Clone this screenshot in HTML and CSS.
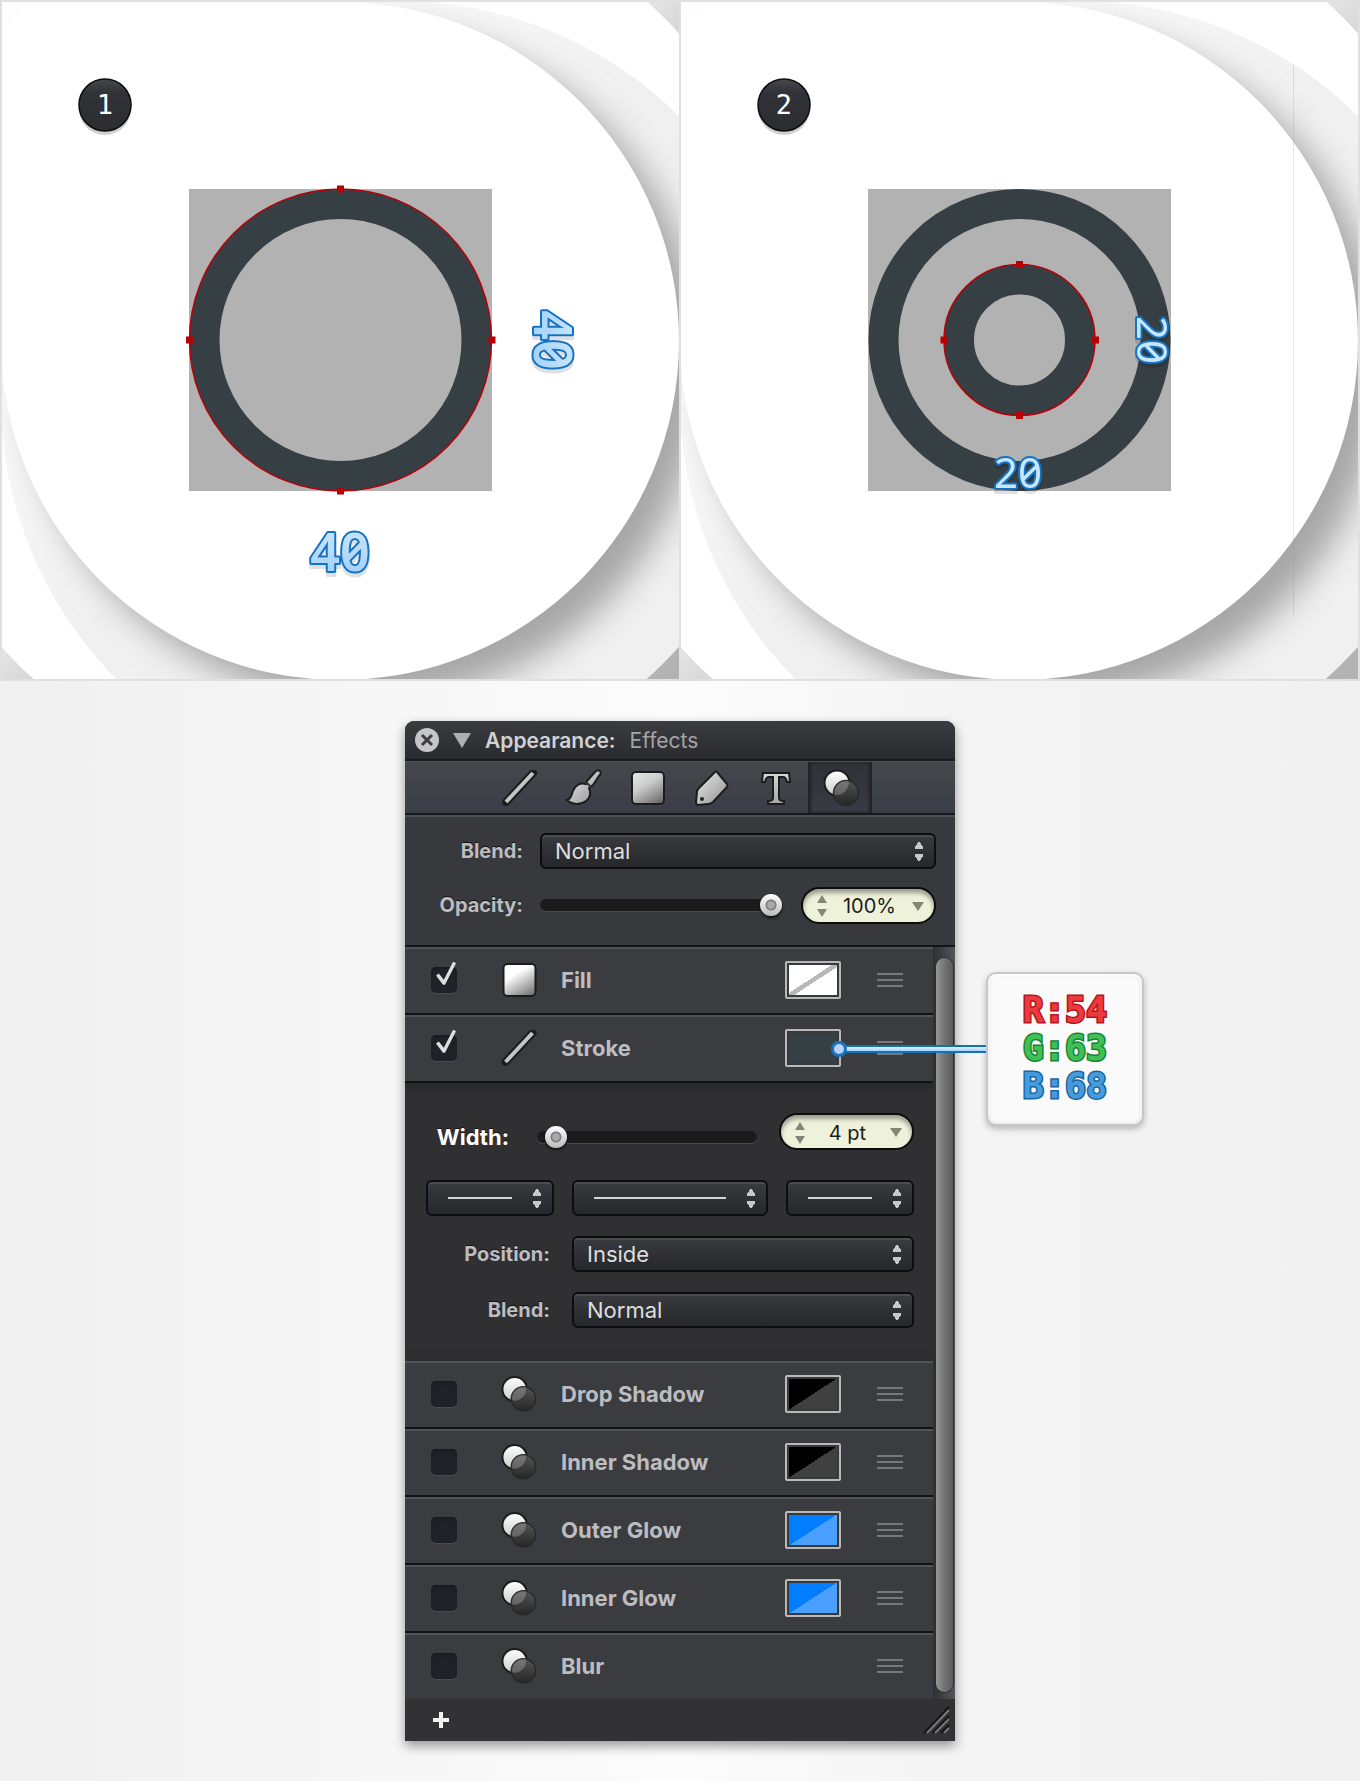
FILE: index.html
```html
<!DOCTYPE html>
<html lang="en">
<head>
<meta charset="utf-8">
<title>Appearance: Effects</title>
<link rel="stylesheet" href="styles.css">
</head>
<body>
<svg class="defs" aria-hidden="true">
  <defs>
    <linearGradient id="metal" x1="0" y1="0" x2="1" y2="1"><stop offset="0" stop-color="#f0f0f0"/><stop offset="1" stop-color="#8c8c8c"/></linearGradient>
    <linearGradient id="steel" x1="0" y1="0" x2="0" y2="1"><stop offset="0" stop-color="#d8d8d8"/><stop offset="1" stop-color="#a4a4a6"/></linearGradient>
    <linearGradient id="tile" x1="0.2" y1="0" x2="0.8" y2="1"><stop offset="0.3" stop-color="#fff"/><stop offset="1" stop-color="#777"/></linearGradient>
    <linearGradient id="dim" x1="0.2" y1="0" x2="0.8" y2="1"><stop offset="0" stop-color="#e4e4e4"/><stop offset="0.4" stop-color="#ccc"/><stop offset="1" stop-color="#6c6c6c"/></linearGradient>
    <linearGradient id="ball" x1="0" y1="0" x2="0" y2="1"><stop offset="0" stop-color="#fff"/><stop offset="1" stop-color="#ccc"/></linearGradient>
    <linearGradient id="dark" x1="0" y1="0" x2="0" y2="1"><stop offset="0" stop-color="#5a5a5a"/><stop offset="1" stop-color="#222"/></linearGradient>
    <linearGradient id="corner" x1="0" y1="0" x2="1" y2="1"><stop offset="0" stop-color="#fff"/><stop offset="0.48" stop-color="#e4e4e4"/><stop offset="0.53" stop-color="#d4d4d4"/><stop offset="1" stop-color="#b2b2b2"/></linearGradient>
    <linearGradient id="disc" x1="0" y1="0" x2="1" y2="1"><stop offset="0.1" stop-color="#fff"/><stop offset="0.45" stop-color="#f0f0f0"/></linearGradient>
    <linearGradient id="ice" x1="0" y1="0" x2="0" y2="1"><stop offset="0" stop-color="#d2ecff"/><stop offset="1" stop-color="#9ccbf7"/></linearGradient>
    <linearGradient id="badge" x1="0" y1="0" x2="0" y2="1"><stop offset="0" stop-color="#47484c"/><stop offset="0.25" stop-color="#323338"/><stop offset="1" stop-color="#2c2d31"/></linearGradient>
    <clipPath id="rim"><circle cx="338" cy="338" r="457"/></clipPath>
    <filter id="soft" x="-20%" y="-20%" width="140%" height="140%"><feGaussianBlur stdDeviation="17"/></filter>
    <symbol id="backdrop" viewBox="0 0 677 677">
      <rect width="677" height="677" fill="url(#corner)"/>
      <circle cx="338" cy="338" r="457" fill="#fff"/>
      <g clip-path="url(#rim)"><circle cx="397" cy="397" r="398" fill="url(#disc)"/>
        <g clip-path="url(#discclip)"><circle cx="363" cy="363" r="338" fill="#a6a6a6" filter="url(#soft)"/></g></g>
      <circle cx="338" cy="339" r="339" fill="#fff"/>
    </symbol>
    <clipPath id="discclip"><circle cx="397" cy="397" r="398"/></clipPath>
    <symbol id="i-line" viewBox="0 0 36 36"><path d="M4 32 31 3" stroke="#1b1c1e" stroke-width="8" stroke-linecap="round"/><path d="M4 32 31 3" stroke="#c4c4c6" stroke-width="4"/></symbol>
    <symbol id="i-fx" viewBox="0 0 38 38"><circle cx="14" cy="14" r="12.500" fill="url(#ball)" stroke="#1b1b1c" stroke-width="2"/><circle cx="23" cy="24" r="12.500" fill="url(#dark)" fill-opacity=".86" stroke="#2a2a2b" stroke-width="1.500"/><path d="M11.500 21A12 12 0 0 1 26 12 12.500 12.500 0 0 1 11.500 26Z" fill="#8a8a8a" opacity=".35"/></symbol>
    <symbol id="i-tile" viewBox="0 0 36 36"><rect x="2" y="2" width="32" height="32" rx="4" fill="url(#tile)" stroke="#1b1b1c" stroke-width="2"/></symbol>
    <symbol id="i-grip" viewBox="0 0 26 16"><path d="M0 2h26M0 8h26M0 14h26" stroke="#78787b" stroke-width="2"/></symbol>
  </defs>
</svg>

<main>
  <section class="boards">
    <svg viewBox="0 0 677 677" role="img" aria-label="Step 1">
      <use href="#backdrop"/>
      <rect x="187" y="187" width="303" height="302" fill="#b2b2b2"/>
      <circle cx="338.500" cy="338" r="136" fill="none" stroke="#363f44" stroke-width="30"/>
      <circle cx="338.500" cy="338" r="151" fill="none" stroke="#b80008" stroke-width="1.500"/>
      <path d="M335 183.500h7v7h-7zM335 485.500h7v7h-7zM184 334.500h7v7h-7zM486.500 334.500h7v7h-7z" fill="#bb0004"/>
      <circle cx="103" cy="107" r="26" fill="#000" opacity=".18"/>
      <circle cx="103" cy="103" r="26" fill="url(#badge)" stroke="#0d0d10" stroke-width="1.500"/>
      <text class="step" x="103" y="112">1</text>
      <g class="size big"><text x="338" y="569">40</text>
        <text transform="translate(532 338) rotate(90)">40</text></g>
    </svg>
    <svg viewBox="0 0 677 677" role="img" aria-label="Step 2">
      <use href="#backdrop"/>
      <path d="M612.500 62v551" stroke="#999" stroke-opacity=".25"/>
      <rect x="187" y="187" width="303" height="302" fill="#b2b2b2"/>
      <circle cx="338.500" cy="338" r="136" fill="none" stroke="#363f44" stroke-width="30"/>
      <circle cx="338.500" cy="338" r="60.500" fill="none" stroke="#363f44" stroke-width="30"/>
      <circle cx="338.500" cy="338" r="75.500" fill="none" stroke="#b80008" stroke-width="1.500"/>
      <path d="M335 259h7v7h-7zM335 410h7v7h-7zM259.500 334.500h7v7h-7zM411 334.500h7v7h-7z" fill="#bb0004"/>
      <circle cx="103" cy="107" r="26" fill="#000" opacity=".18"/>
      <circle cx="103" cy="103" r="26" fill="url(#badge)" stroke="#0d0d10" stroke-width="1.500"/>
      <text class="step" x="103" y="112">2</text>
      <g class="size"><text x="337" y="486">20</text>
        <text transform="translate(456 338) rotate(90)">20</text></g>
    </svg>
  </section>

  <section class="stage">
    <div class="panel">
      <header class="title">
        <button class="close" aria-label="Close"><svg width="24" height="24" viewBox="0 0 24 24"><circle cx="12" cy="12" r="12" fill="#c6c6c8"/><path d="m7 7 10 10M17 7 7 17" stroke="#3c3d40" stroke-width="3"/></svg></button>
        <svg class="tri" width="18" height="15" viewBox="0 0 18 15"><path d="M0 0h18L9 15Z" fill="#aeaeb1"/></svg>
        <h1>Appearance:</h1><span>Effects</span>
      </header>
      <nav class="tools">
        <button aria-label="Stroke"><svg width="36" height="36"><use href="#i-line"/></svg></button>
        <button aria-label="Brush"><svg width="38" height="38" viewBox="0 0 38 38"><path d="M2 31c5-1 4-6 7-11 3-5 8-6 12-5l1-3 8-9q3-3 5-1t-1 5l-6 9-4 3c2 5 1 10-3 13-5 4-14 4-19-1Z" fill="url(#metal)" stroke="#1b1c1e" stroke-width="2"/><path d="m21 13 5 5" stroke="#333" stroke-width="2"/></svg></button>
        <button aria-label="Fill"><svg width="36" height="36" viewBox="0 0 36 36"><rect x="2" y="2" width="32" height="32" rx="4" fill="url(#dim)" stroke="#1b1c1e" stroke-width="2"/></svg></button>
        <button aria-label="Tag"><svg width="36" height="36" viewBox="0 0 36 36"><path d="M21 2Q22 1 23 2L33 14Q34 16 33 17L19 32Q17 34 14 34L4 35Q2 35 2 32L3 22Q3 20 5 18Z" fill="url(#metal)" stroke="#1b1c1e" stroke-width="2"/><circle cx="8" cy="29" r="2" fill="#222"/></svg></button>
        <button aria-label="Text"><svg width="32" height="36" viewBox="0 0 32 36"><path d="M3 3H29L30 12H27Q26 7 23 7H19V28Q19 31 24 31V34H8V31Q13 31 13 28V7H9Q6 7 5 12H2Z" fill="url(#steel)" stroke="#1b1c1e" stroke-width="2"/></svg></button>
        <button class="on" aria-label="Effects"><svg width="38" height="38"><use href="#i-fx"/></svg></button>
      </nav>
      <section class="blend">
        <label for="blend">Blend:</label>
        <select id="blend"><option>Normal</option></select>
        <label for="opacity">Opacity:</label>
        <div class="pair">
          <input id="opacity" type="range" min="0" max="100" value="100">
          <div class="field"><svg width="10" height="22" viewBox="0 0 10 22"><path d="m0 8 5-8 5 8ZM0 14l5 8 5-8Z" fill="#858678"/></svg><input type="text" value="100%" aria-label="Opacity value"><svg width="12" height="9" viewBox="0 0 12 9"><path d="M0 0h12L6 9Z" fill="#858678"/></svg></div>
        </div>
      </section>
      <div class="body">
        <div class="list">
          <div class="row"><input id="c1" type="checkbox" checked><svg width="36" height="36"><use href="#i-tile"/></svg><label for="c1">Fill</label><button class="swatch none" aria-label="Fill colour"></button><svg class="grip"><use href="#i-grip"/></svg></div>
          <div class="row"><input id="c2" type="checkbox" checked><svg width="36" height="36"><use href="#i-line"/></svg><label for="c2">Stroke</label><button class="swatch slate" aria-label="Stroke colour"></button><svg class="grip"><use href="#i-grip"/></svg>
            <div class="callout"><i class="wire"></i><div class="rgb"><span class="r">R:54</span><span class="g">G:63</span><span class="b">B:68</span></div></div>
          </div>
          <div class="details">
            <div class="line width">
              <label for="width">Width:</label>
              <input id="width" type="range" min="0" max="100" value="4">
              <div class="field"><svg width="10" height="22" viewBox="0 0 10 22"><path d="m0 8 5-8 5 8ZM0 14l5 8 5-8Z" fill="#858678"/></svg><input type="text" value="4 pt" aria-label="Width value"><svg width="12" height="9" viewBox="0 0 12 9"><path d="M0 0h12L6 9Z" fill="#858678"/></svg></div>
            </div>
            <div class="line ends">
              <select class="rule" aria-label="Start"><option></option></select>
              <select class="rule" aria-label="Dash"><option></option></select>
              <select class="rule" aria-label="End"><option></option></select>
            </div>
            <div class="line opt"><label for="pos">Position:</label><select id="pos"><option>Inside</option></select></div>
            <div class="line opt"><label for="sb">Blend:</label><select id="sb"><option>Normal</option></select></div>
          </div>
          <div class="row"><input id="c3" type="checkbox"><svg width="38" height="38"><use href="#i-fx"/></svg><label for="c3">Drop Shadow</label><button class="swatch black" aria-label="Drop shadow colour"></button><svg class="grip"><use href="#i-grip"/></svg></div>
          <div class="row"><input id="c4" type="checkbox"><svg width="38" height="38"><use href="#i-fx"/></svg><label for="c4">Inner Shadow</label><button class="swatch black" aria-label="Inner shadow colour"></button><svg class="grip"><use href="#i-grip"/></svg></div>
          <div class="row"><input id="c5" type="checkbox"><svg width="38" height="38"><use href="#i-fx"/></svg><label for="c5">Outer Glow</label><button class="swatch blue" aria-label="Outer glow colour"></button><svg class="grip"><use href="#i-grip"/></svg></div>
          <div class="row"><input id="c6" type="checkbox"><svg width="38" height="38"><use href="#i-fx"/></svg><label for="c6">Inner Glow</label><button class="swatch blue" aria-label="Inner glow colour"></button><svg class="grip"><use href="#i-grip"/></svg></div>
          <div class="row"><input id="c7" type="checkbox"><svg width="38" height="38"><use href="#i-fx"/></svg><label for="c7">Blur</label><svg class="grip"><use href="#i-grip"/></svg></div>
        </div>
        <div class="scroll"><div class="thumb"></div></div>
      </div>
      <footer class="foot">
        <button aria-label="Add effect"><svg width="16" height="16" viewBox="0 0 16 16"><path d="M6 0h4v6h6v4h-6v6H6v-6H0V6h6Z" fill="#f2f2f4"/></svg></button>
        <svg width="28" height="28" viewBox="0 0 28 28" fill="none"><path d="M1 27 26 1M10 27 26 10M18 27l8-8" stroke="#151518" stroke-width="2"/><path d="M4 27 26 4M12 27l14-14M21 27l5-5" stroke="#77777b" stroke-width="2"/></svg>
      </footer>
    </div>
  </section>
</main>
</body>
</html>
```
FILE: styles.css
```css
*, *::before { box-sizing: border-box; }
body {
  margin: 0;
  background: #f6f6f6;
  font-family: Inter, "Liberation Sans", sans-serif;
  font-size: 20px;
  color: #bdbdc1;
}
.defs { position: absolute; width: 0; height: 0; }
button { padding: 0; border: 0; background: none; }
svg { display: block; }

.boards {
  display: grid;
  grid-template-columns: 1fr 1fr;
  gap: 2px;
  padding: 2px;
  background: #e0e0e0;
}
.boards svg { width: 100%; }
.boards text { text-anchor: middle; }
.step { font-family: "DejaVu Sans Mono", monospace; font-size: 27px; fill: #fff; }
.size {
  font-family: "Noto Sans", sans-serif;
  font-feature-settings: "zero";
  font-size: 42px;
  fill: #c9e6ff;
  stroke: #1273c4;
  stroke-width: 4px;
  stroke-linejoin: round;
  filter: drop-shadow(0 4px 0 rgba(0, 0, 0, .12));
}
.size text { paint-order: stroke; }
.size.big { font-size: 52px; font-weight: 600; fill: url(#ice); }

.stage {
  display: flex;
  justify-content: center;
  padding: 40px 0;
  background: linear-gradient(90deg, #f0f0f0, #f8f8f8 35%, #fcfcfc 50%, #f4f4f4 70%, #f1f1f1);
}
.panel {
  width: 550px;
  border-radius: 9px 9px 0 0;
  background: #38393c;
  box-shadow: 0 5px 12px rgba(0, 0, 0, .4);
}
.title {
  display: flex;
  align-items: center;
  height: 40px;
  padding: 0 10px;
  border-bottom: 2px solid #1a1b1d;
  border-radius: 9px 9px 0 0;
  background: linear-gradient(#3b3c3f, #2a2b2e);
}
.tri { margin: 0 14px; }
.title h1 { margin: 0 14px 0 0; font-size: 21px; font-weight: 600; color: #d2d2d5; }
.title span { font-size: 21px; color: #a5a5a8; }

.tools {
  display: flex;
  justify-content: center;
  height: 54px;
  border-top: 1px solid #525356;
  border-bottom: 2px solid #17181b;
  background: linear-gradient(#45474c, #3c3e47);
}
.tools button { display: flex; align-items: center; justify-content: center; width: 64px; }
.tools .on {
  padding-left: 4px;
  background: linear-gradient(#303137, #3a3b43);
  box-shadow: inset 3px 0 3px #222327, inset -3px 0 3px #222327;
}

.blend {
  display: grid;
  grid-template-columns: 118px 1fr;
  align-items: center;
  gap: 17px;
  height: 132px;
  padding: 16px 19px 21px 0;
  border-top: 2px solid #4d4e51;
  border-bottom: 2px solid #141518;
}
.blend label, .line label { text-align: right; font-weight: 700; text-shadow: 0 -1px #111; }
.pair { display: flex; align-items: center; justify-content: space-between; }
.pair input[type="range"] { width: 242px; }

select {
  appearance: none;
  width: 100%;
  height: 36px;
  padding: 0 13px;
  border: 2px solid #0c0d0f;
  border-radius: 6px;
  background:
    conic-gradient(from 147deg at 50% 0, #c8c8ca 66deg, transparent 0) right 11px top 6px / 8px 8px no-repeat,
    conic-gradient(from -33deg at 50% 100%, #c8c8ca 66deg, transparent 0) right 11px top 19px / 8px 8px no-repeat,
    linear-gradient(#3a3b3f, #26272c);
  box-shadow: inset 0 2px #4c4d50;
  color: #dededf;
  font: 22px Inter, "Liberation Sans", sans-serif;
}

input[type="range"] { appearance: none; height: 24px; margin: 0; background: none; }
input[type="range"]::-webkit-slider-runnable-track {
  height: 12px;
  border-radius: 6px;
  background: #1b1b1c;
  box-shadow: 0 1px #4a4a4c;
}
input[type="range"]::-webkit-slider-thumb {
  appearance: none;
  width: 22px;
  height: 22px;
  margin-top: -5px;
  border-radius: 50%;
  background: radial-gradient(circle, #aaa 3px, #777 5px, transparent 6px), linear-gradient(#fff, #bbb);
  box-shadow: 0 2px 3px #111;
}

.field {
  display: flex;
  align-items: center;
  width: 135px;
  height: 37px;
  padding: 2px 10px 0 14px;
  border: 2px solid #0c0c0d;
  border-radius: 19px;
  background: #eff2db;
  box-shadow: inset 0 4px 4px #9b9d8e;
}
.field input {
  flex: 1;
  min-width: 0;
  padding: 0;
  border: 0;
  background: none;
  color: #1c1c1c;
  font: 20px Inter, "Liberation Sans", sans-serif;
  text-align: center;
}

.body { display: flex; }
.list { flex: 1; padding-right: 2px; background: #2f3032; }
.row {
  position: relative;
  display: flex;
  align-items: center;
  height: 68px;
  padding: 0 30px 3px 26px;
  border-top: 2px solid #525356;
  border-bottom: 2px solid #111215;
  background: #3b3c3f;
}
.row:last-child { height: 66px; border-bottom: 0; }
.row > svg:not(.grip) { margin: 0 23px 0 44px; width: 37px; }
.row label { flex: 1; font-size: 22px; font-weight: 700; }
.grip { width: 26px; height: 16px; margin-left: 36px; }

input[type="checkbox"] {
  appearance: none;
  width: 26px;
  height: 26px;
  margin: 0;
  border-radius: 5px;
  background: #20222a;
  box-shadow: inset 0 2px 3px #191a1e, 0 1px #4a4b4e;
}
input[type="checkbox"]:checked::before {
  content: "";
  display: block;
  width: 20px;
  height: 24px;
  margin: -5px 0 0 5px;
  background: #dedee0;
  clip-path: polygon(0 58%, 14% 50%, 39% 76%, 86% 0, 100% 7%, 45% 97%, 35% 97%);
}

.swatch { width: 56px; height: 38px; border: 2px solid #b9b9ba; border-radius: 2px; box-shadow: inset 0 0 0 2px #38393b; }
.none { background: linear-gradient(to bottom right, #fff 46%, #b8b8b8 46% 54%, #fff 54%); }
.slate { background: #363f44; }
.black { background: linear-gradient(to bottom right, #000 50%, #404040 50%); }
.blue { background: linear-gradient(to bottom right, #007eff 50%, #4b9fff 50%); }

.details {
  display: flex;
  flex-direction: column;
  gap: 20px;
  height: 278px;
  padding: 30px 19px 0 21px;
  background: linear-gradient(#29292c, #303033 12px 262px, #2d2d31);
}
.line { display: flex; align-items: center; }
.width { height: 47px; }
.width label { width: 83px; margin-right: 28px; color: #fff; font-size: 22px; }
.width input[type="range"] { width: 220px; }
.width .field { align-self: flex-start; margin-left: auto; }
.ends { gap: 18px; }
.ends select { flex: 0 0 128px; }
.ends select:nth-child(2) { flex: 1; }
.rule {
  background:
    linear-gradient(#d6d6d8, #d6d6d8) left 20px top 15px / calc(100% - 60px) 2px no-repeat,
    conic-gradient(from 147deg at 50% 0, #c8c8ca 66deg, transparent 0) right 11px top 6px / 8px 8px no-repeat,
    conic-gradient(from -33deg at 50% 100%, #c8c8ca 66deg, transparent 0) right 11px top 19px / 8px 8px no-repeat,
    linear-gradient(#3a3b3f, #26272c);
}
.opt label { flex: 0 0 124px; margin-right: 22px; }

.scroll { width: 20px; padding: 11px 2px 7px 1px; background: linear-gradient(90deg, #333436, #55565a); }
.thumb { height: 100%; border-radius: 9px; background: linear-gradient(90deg, #969696, #737373 50%, #5a5a5a); box-shadow: 0 0 0 1px #2e2f31; }
.foot { display: flex; align-items: center; justify-content: space-between; height: 42px; padding: 0 4px 0 28px; background: #323235; }

/* Colour read-out pinned to the stroke swatch */
.callout { position: absolute; left: 428px; top: -45px; display: flex; align-items: center; z-index: 1; }
.wire { position: relative; width: 153px; height: 8px; border: 2px solid #1670b8; border-right: 0; background: linear-gradient(#e2f3ff, #a4d2f7); }
.wire::before { content: ""; position: absolute; left: -4px; top: -6px; width: 16px; height: 16px; border: 3px solid #1a72bd; border-radius: 50%; background: #b9d3f5; }
.rgb {
  display: flex;
  flex-direction: column;
  justify-content: center;
  width: 158px;
  height: 154px;
  padding-bottom: 2px;
  border: 2px solid #c6c6c6;
  border-radius: 10px;
  background: #fafafa;
  box-shadow: inset 0 2px 3px #fff, inset 0 0 5px #ddd, 0 3px 6px rgba(0, 0, 0, .25);
  font: 700 35px/38px "DejaVu Sans Mono", monospace;
  text-align: center;
}
.rgb span { paint-order: stroke; }
.r { color: #ec3a3e; -webkit-text-stroke: 3px #b3151c; }
.g { color: #3fc057; -webkit-text-stroke: 3px #168435; }
.b { color: #459bdc; -webkit-text-stroke: 3px #1a659f; }
```
